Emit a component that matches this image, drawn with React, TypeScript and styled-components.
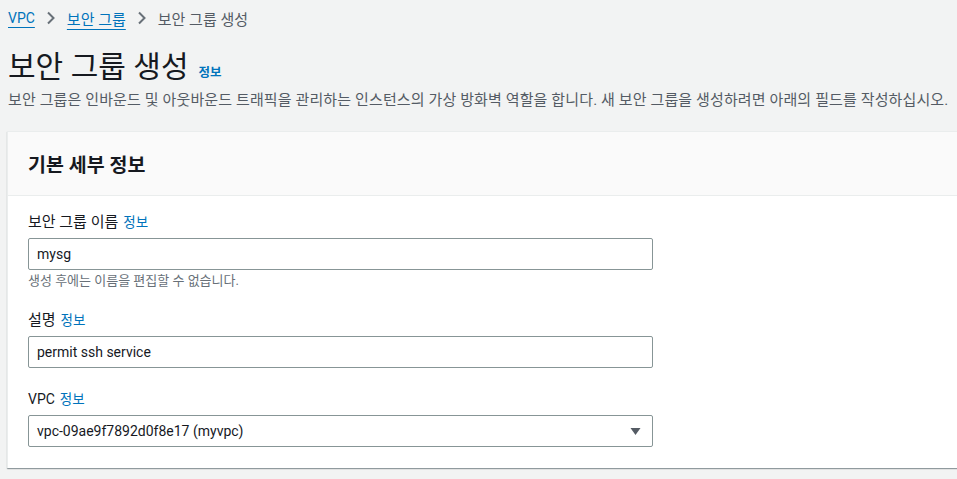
import styled, { createGlobalStyle } from "styled-components";

const GlobalStyle = createGlobalStyle`
  html, body {
    margin: 0;
    padding: 0;
    background: #f2f3f3;
    overflow: hidden;
  }
  body {
    font-family: Roboto, "Noto Sans CJK KR", sans-serif;
    color: #16191f;
  }
`;

const Page = styled.div`
  padding: 0 0 0 8px;
  height: 479px;
`;

const Breadcrumbs = styled.nav`
  display: flex;
  align-items: center;
  height: 36px;
  font-size: 15px;
  color: #545b64;
`;

const Crumb = styled.a<{ latin?: boolean }>`
  color: #0073bb;
  font-size: ${(p) => (p.latin ? "14px" : "15px")};
  text-decoration: underline;
  text-underline-offset: 4px;
`;

const Chevron = () => (
  <ChevronBox>
    <svg width="10" height="14" viewBox="0 0 10 14">
      <path d="M2 1.5 L7.5 7 L2 12.5" fill="none" stroke="#687078" strokeWidth="2" />
    </svg>
  </ChevronBox>
);

const ChevronBox = styled.span`
  display: inline-flex;
  padding: 0 11px 0 11px;
`;

const TitleRow = styled.div`
  display: flex;
  align-items: baseline;
  gap: 10px;
  margin-top: 13px;
`;

const Title = styled.h1`
  margin: 0;
  font-size: 30px;
  font-weight: 400;
  line-height: 36px;
  color: #16191f;
`;

const InfoLink = styled.a<{ strong?: boolean }>`
  color: #0073bb;
  font-size: ${(p) => (p.strong ? "12.5px" : "13.5px")};
  font-weight: ${(p) => (p.strong ? 700 : 400)};
  text-decoration: none;
`;

const Description = styled.p`
  margin: 5px 0 0;
  font-size: 15px;
  letter-spacing: 0.12px;
  line-height: 20px;
  color: #545b64;
  white-space: nowrap;
`;

const Card = styled.section`
  margin: 21px -20px 0 -1px;
  background: #fff;
  border: 1px solid #eaeded;
  border-bottom: none;
  box-shadow: 0 1px 1px 0 rgba(0, 28, 36, 0.3), 1px 1px 1px 0 rgba(0, 28, 36, 0.15);
`;

const CardHeader = styled.header`
  background: #fafafa;
  border-bottom: 1px solid #eaeded;
  height: 63px;
  display: flex;
  align-items: center;
  padding-left: 20px;

  h2 {
    margin: 0;
    font-size: 19.5px;
    font-weight: 700;
    color: #16191f;
  }
`;

const CardBody = styled.div`
  padding: 16px 20px 21px;
  display: flex;
  flex-direction: column;
  gap: 21px;
`;

const Field = styled.div`
  display: flex;
  flex-direction: column;
  width: 625px;
`;

const Label = styled.label<{ latin?: boolean }>`
  font-size: ${(p) => (p.latin ? "14px" : "15px")};
  line-height: 20px;
  color: #16191f;
  margin-bottom: 6px;
  display: flex;
  gap: 5px;
  align-items: baseline;
`;

const Input = styled.div`
  height: 30px;
  border: 1px solid #879596;
  border-radius: 2px;
  display: flex;
  align-items: center;
  justify-content: space-between;
  padding: 0 11px 0 8px;
  font-size: 14px;
  color: #16191f;
`;

const Hint = styled.div`
  font-size: 13px;
  line-height: 16px;
  color: #687078;
  margin-top: 3px;
`;

const Caret = () => (
  <svg width="11" height="9" viewBox="0 0 11 9">
    <path d="M0.5 1 L10.5 1 L5.5 8 Z" fill="#545b64" />
  </svg>
);

export default function App() {
  return (
    <Page>
      <GlobalStyle />
      <Breadcrumbs>
        <Crumb latin>VPC</Crumb>
        <Chevron />
        <Crumb>보안 그룹</Crumb>
        <Chevron />
        <span>보안 그룹 생성</span>
      </Breadcrumbs>
      <TitleRow>
        <Title>보안 그룹 생성</Title>
        <InfoLink strong>정보</InfoLink>
      </TitleRow>
      <Description>
        보안 그룹은 인바운드 및 아웃바운드 트래픽을 관리하는 인스턴스의 가상 방화벽 역할을 합니다. 새 보안 그룹을 생성하려면 아래의 필드를 작성하십시오.
      </Description>
      <Card>
        <CardHeader>
          <h2>기본 세부 정보</h2>
        </CardHeader>
        <CardBody>
          <Field>
            <Label>
              보안 그룹 이름 <InfoLink>정보</InfoLink>
            </Label>
            <Input>mysg</Input>
            <Hint>생성 후에는 이름을 편집할 수 없습니다.</Hint>
          </Field>
          <Field>
            <Label>
              설명 <InfoLink>정보</InfoLink>
            </Label>
            <Input>permit ssh service</Input>
          </Field>
          <Field>
            <Label latin>
              VPC <InfoLink>정보</InfoLink>
            </Label>
            <Input>
              vpc-09ae9f7892d0f8e17 (myvpc)
              <Caret />
            </Input>
          </Field>
        </CardBody>
      </Card>
    </Page>
  );
}
